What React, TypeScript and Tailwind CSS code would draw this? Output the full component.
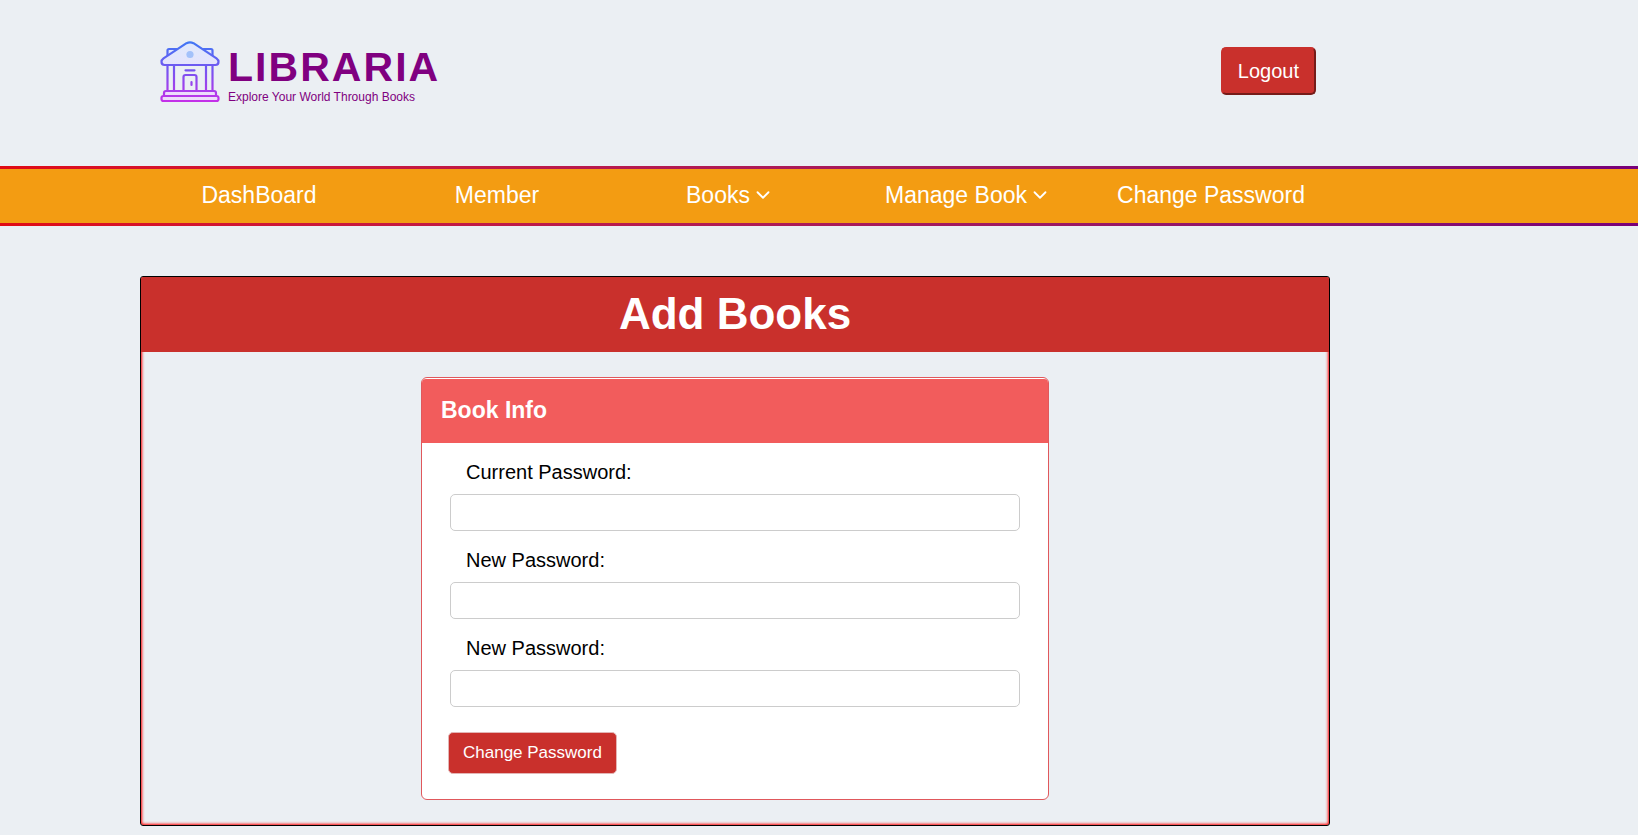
import { ChevronDown } from "lucide-react";

type NavEntry = { label: string; hasMenu?: boolean };

const navEntries: NavEntry[] = [
  { label: "DashBoard" },
  { label: "Member" },
  { label: "Books", hasMenu: true },
  { label: "Manage Book", hasMenu: true },
  { label: "Change Password" },
];

const fields = [
  { id: "current-password", label: "Current Password:" },
  { id: "new-password", label: "New Password:" },
  { id: "confirm-password", label: "New Password:" },
];

function LibraryLogo() {
  return (
    <svg viewBox="0 0 60 62" className="h-[62px] w-[60px] shrink-0" fill="none" aria-hidden="true">
      <defs>
        <linearGradient id="logo-stroke" x1="0" y1="0" x2="0" y2="62" gradientUnits="userSpaceOnUse">
          <stop offset="0" stopColor="#3f78f5" />
          <stop offset="0.5" stopColor="#7a52f0" />
          <stop offset="1" stopColor="#c82ee8" />
        </linearGradient>
        <linearGradient id="logo-fill" x1="0" y1="0" x2="0" y2="62" gradientUnits="userSpaceOnUse">
          <stop offset="0" stopColor="#dfeafc" />
          <stop offset="1" stopColor="#efd9fb" />
        </linearGradient>
      </defs>
      <g stroke="url(#logo-stroke)" strokeWidth="2.2" strokeLinejoin="round" strokeLinecap="round">
        <path d="M7.500 16 V9.500 Q7.500 8 9 8 H16.500 M43.500 8 H51 Q52.500 8 52.500 9.500 V16" fill="url(#logo-fill)" />
        <path d="M7.500 24 V50 M14 24 V50 M46 24 V50 M52.500 24 V50" />
        <path d="M26.500 2.200 Q30 0.600 33.500 2.200 L56.500 17.300 Q58.500 18.800 58.500 20.800 Q58.500 24 55.500 24 H4.500 Q1.500 24 1.500 20.800 Q1.500 18.800 3.500 17.300 Z" fill="url(#logo-fill)" />
        <path d="M25.500 29.300 H34.500" />
        <path d="M23.500 50 V36 Q23.500 34 25.500 34 H34.500 Q36.500 34 36.500 36 V50" />
        <path d="M31.500 41 V44" />
        <path d="M4 55 V52 Q4 50 6 50 H54 Q56 50 56 52 V55" fill="url(#logo-fill)" />
        <rect x="1.500" y="55" width="57" height="5" rx="2" fill="url(#logo-fill)" />
      </g>
      <circle cx="30" cy="13.500" r="3.600" fill="#a3c1fa" />
    </svg>
  );
}

export default function App() {
  return (
    <div className="min-h-screen bg-[#ebeff3] pb-2 font-['Liberation_Sans',Arial,sans-serif] text-black">
      <header className="ml-[140px] flex h-[166px] max-w-[1190px] items-start justify-between pr-3.5 pl-5">
        <div className="flex items-start gap-2 pt-[41px]">
          <LibraryLogo />
          <div className="pt-[5px] text-[#800080]">
            <div className="text-[41px] leading-[43px] font-bold tracking-wider">LIBRARIA</div>
            <div className="text-xs leading-4">Explore Your World Through Books</div>
          </div>
        </div>
        <button
          type="button"
          className="mt-[47px] h-12 rounded-[5px] border-2 border-t-[#c9302c] border-r-[#761c19] border-b-[#761c19] border-l-[#c9302c] bg-[#c9302c] px-[15px] text-xl leading-6 text-white"
        >
          Logout
        </button>
      </header>

      <div className="bg-linear-to-r from-[#e00a12] to-[#780078] py-[3px]">
        <nav className="bg-[#f39c12]">
          <ul className="ml-[140px] grid max-w-[1190px] grid-cols-5">
            {navEntries.map((entry) => (
              <li key={entry.label}>
                <a
                  href="#"
                  className={
                    "flex h-[54px] items-center justify-center pb-0.5 text-[23px] leading-8 whitespace-nowrap text-white" +
                    (entry.hasMenu ? " gap-0.5 pr-2.5" : "")
                  }
                >
                  {entry.label}
                  {entry.hasMenu && <ChevronDown size={22} strokeWidth={2} aria-hidden="true" />}
                </a>
              </li>
            ))}
          </ul>
        </nav>
      </div>

      <main className="mt-[50px] ml-[140px] max-w-[1190px] rounded-[3px] border border-black shadow-[inset_0_0_3px_1px_#ff0000]">
        <h1 className="rounded-t-[2px] bg-[#c9302c] pb-0.5 text-center text-[44px] leading-[73px] font-bold text-white">
          Add Books
        </h1>
        <div className="py-[25px]">
          <section className="mx-auto max-w-[628px] rounded-md border border-[#e0585c] bg-white pt-px">
            <h2 className="rounded-t-[4px] bg-[#f25c5c] px-[19px] pb-0.5 text-[23px] leading-[62px] font-bold text-white">
              Book Info
            </h2>
            <form className="px-[26px] pt-3.5 pb-[25px]" onSubmit={(event) => event.preventDefault()}>
              <div className="flex flex-col gap-3.5 px-0.5">
                {fields.map((field) => (
                  <div key={field.id} className="flex flex-col gap-[7px]">
                    <label htmlFor={field.id} className="pl-4 text-xl leading-[30px]">
                      {field.label}
                    </label>
                    <input
                      id={field.id}
                      type="password"
                      className="h-[37px] w-full rounded-[5px] border border-[#cccccc] bg-white px-3 text-base"
                    />
                  </div>
                ))}
              </div>
              <button
                type="submit"
                className="mt-[25px] block h-[42px] rounded-[5px] border border-[#e3b5b5] bg-[#c9302c] px-3.5 text-[17px] leading-6 text-white"
              >
                Change Password
              </button>
            </form>
          </section>
        </div>
      </main>
    </div>
  );
}
